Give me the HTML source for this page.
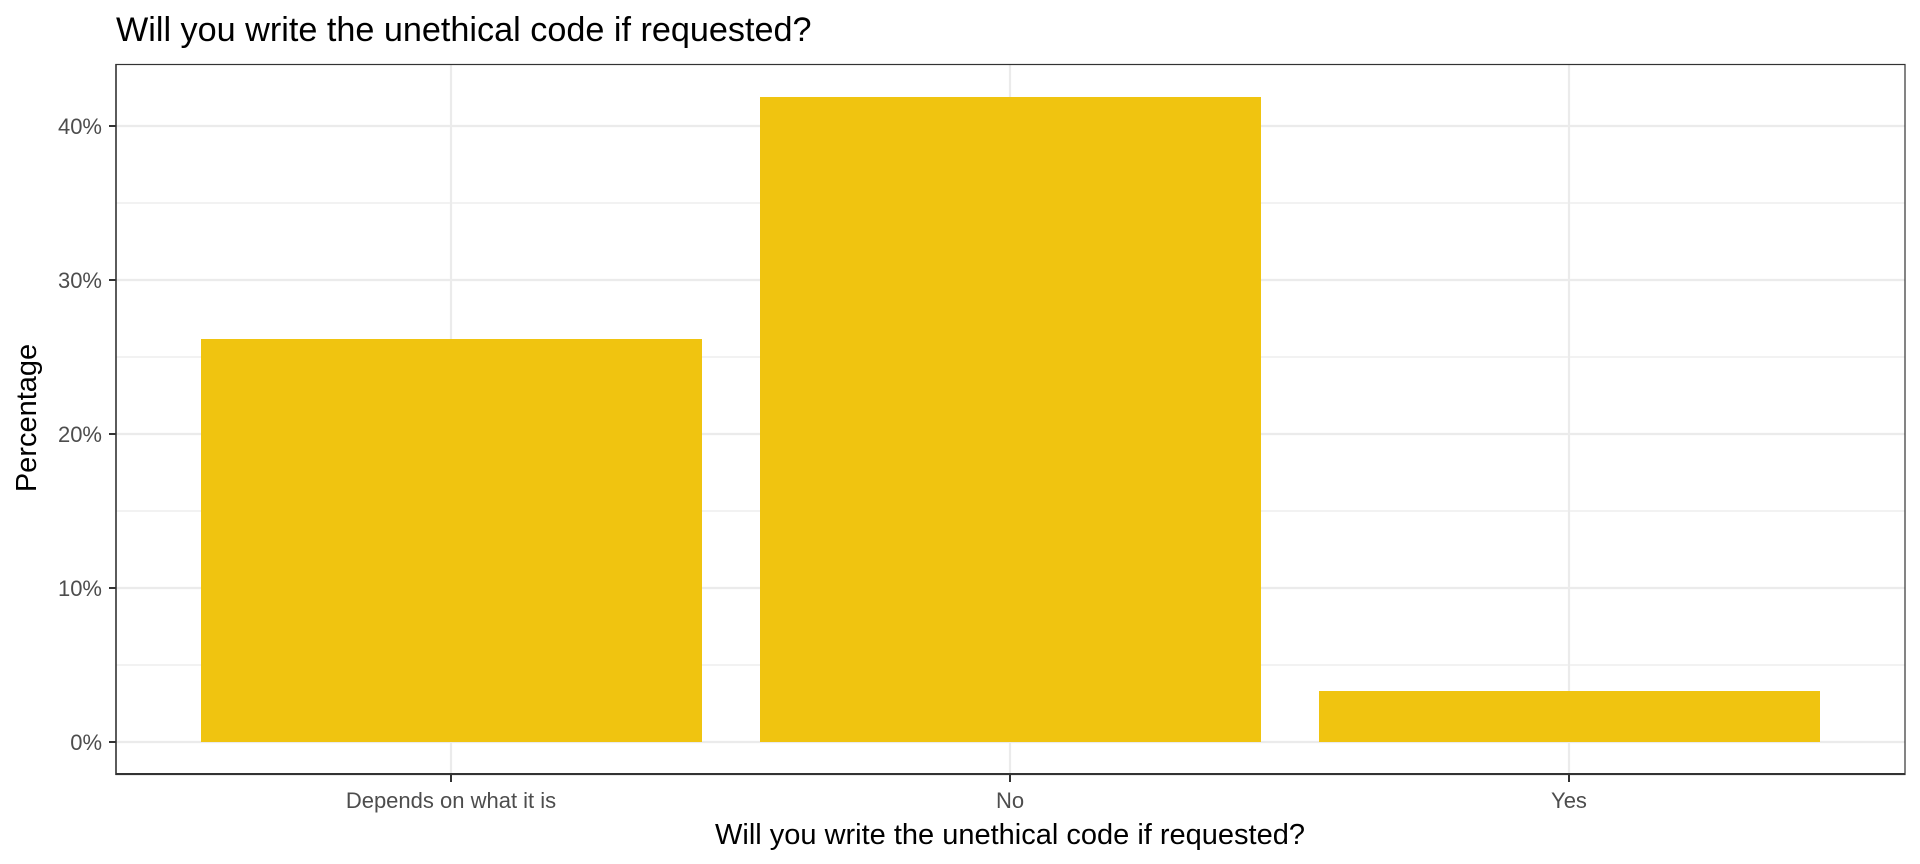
<!DOCTYPE html>
<html><head><meta charset="utf-8"><style>html,body{margin:0;padding:0;background:#fff;}svg{display:block}</style></head>
<body>
<svg width="1920" height="864" xmlns="http://www.w3.org/2000/svg" font-family="Liberation Sans, Arial, sans-serif">
<rect width="1920" height="864" fill="#fff"/>
<text x="116" y="41" font-size="34.2" fill="#000">Will you write the unethical code if requested?</text>
<g stroke="#ebebeb" stroke-width="1.2">
<line x1="116" x2="1905" y1="665" y2="665"/><line x1="116" x2="1905" y1="511" y2="511"/><line x1="116" x2="1905" y1="357" y2="357"/><line x1="116" x2="1905" y1="203" y2="203"/>
</g>
<g stroke="#ebebeb" stroke-width="2.2">
<line x1="116" x2="1905" y1="742" y2="742"/><line x1="116" x2="1905" y1="588" y2="588"/><line x1="116" x2="1905" y1="434" y2="434"/><line x1="116" x2="1905" y1="280" y2="280"/><line x1="116" x2="1905" y1="126" y2="126"/>
<line x1="451" x2="451" y1="64" y2="775"/><line x1="1010" x2="1010" y1="64" y2="775"/><line x1="1569" x2="1569" y1="64" y2="775"/>
</g>
<g fill="#f0c410">
<rect x="201" y="339" width="501" height="403"/>
<rect x="760" y="97" width="501" height="645"/>
<rect x="1319" y="691" width="501" height="51"/>
</g>
<rect x="116" y="64.5" width="1789" height="710" fill="none" stroke="#333" stroke-width="1.2"/>
<line x1="116" x2="1905" y1="774" y2="774" stroke="#333" stroke-width="2"/>
<line x1="116" x2="116" y1="64" y2="775" stroke="#333" stroke-width="1.5"/>
<g stroke="#333" stroke-width="2">
<line x1="109" x2="116" y1="742" y2="742"/><line x1="109" x2="116" y1="588" y2="588"/><line x1="109" x2="116" y1="434" y2="434"/><line x1="109" x2="116" y1="280" y2="280"/><line x1="109" x2="116" y1="126" y2="126"/>
<line x1="451" x2="451" y1="775" y2="782"/><line x1="1010" x2="1010" y1="775" y2="782"/><line x1="1569" x2="1569" y1="775" y2="782"/>
</g>
<g font-size="22" fill="#4d4d4d" text-anchor="end">
<text x="102" y="750">0%</text><text x="102" y="596">10%</text><text x="102" y="442">20%</text><text x="102" y="288">30%</text><text x="102" y="134">40%</text>
</g>
<g font-size="22" fill="#4d4d4d" text-anchor="middle">
<text x="451" y="808">Depends on what it is</text><text x="1010" y="808">No</text><text x="1569" y="808">Yes</text>
</g>
<text x="1010" y="844" font-size="29" text-anchor="middle" fill="#000">Will you write the unethical code if requested?</text>
<text transform="translate(36,418) rotate(-90)" font-size="29" text-anchor="middle" fill="#000">Percentage</text>
</svg>
</body></html>
